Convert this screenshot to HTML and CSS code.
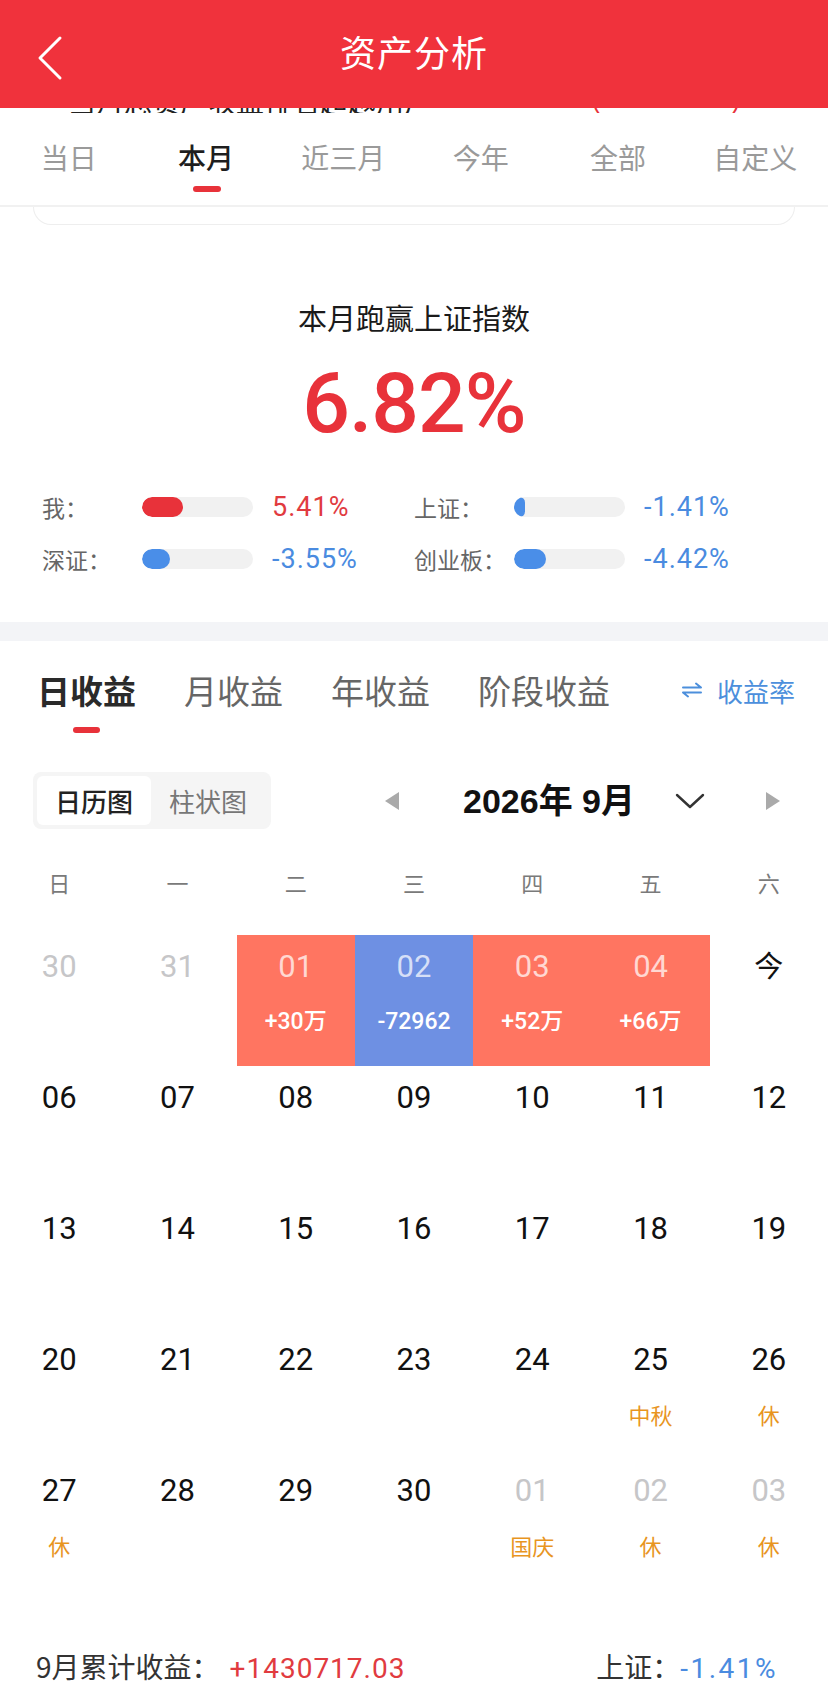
FILE: index.html
```html
<!DOCTYPE html>
<html lang="zh-CN">
<head>
<meta charset="utf-8">
<title>资产分析</title>
<link rel="stylesheet" href="styles.css">
</head>
<body>
<div class="page">
  <header class="nav">
    <svg class="back" width="30" height="46" viewBox="0 0 30 46"><polyline points="24,3 4,23 24,43" fill="none" stroke="#fff" stroke-width="3" stroke-linecap="round" stroke-linejoin="round"/></svg>
    <h1 class="nav-title">资产分析</h1>
  </header>

  <div class="period-bar">
    <div class="peek"><span class="peek-text">当月总资产收益排名超越用户</span><span class="peek-red a">（</span><span class="peek-red b">）</span></div>
    <div class="period-tabs">
      <div class="ptab">当日</div>
      <div class="ptab active">本月</div>
      <div class="ptab">近三月</div>
      <div class="ptab">今年</div>
      <div class="ptab">全部</div>
      <div class="ptab">自定义</div>
    </div>
  </div>
  <div class="card-edge"></div>

  <section class="beat">
    <div class="beat-title">本月跑赢上证指数</div>
    <div class="beat-value">6.82%</div>
    <div class="cmp-grid">
      <div class="cmp">
        <span class="cmp-label">我：</span>
        <span class="track"><span class="fill red" style="width:41px"></span></span>
        <span class="cmp-val red-t">5.41%</span>
      </div>
      <div class="cmp">
        <span class="cmp-label">上证：</span>
        <span class="track"><span class="fill blue" style="width:11px"></span></span>
        <span class="cmp-val blue-t">-1.41%</span>
      </div>
      <div class="cmp">
        <span class="cmp-label">深证：</span>
        <span class="track"><span class="fill blue" style="width:28px"></span></span>
        <span class="cmp-val blue-t">-3.55%</span>
      </div>
      <div class="cmp">
        <span class="cmp-label">创业板：</span>
        <span class="track"><span class="fill blue" style="width:32px"></span></span>
        <span class="cmp-val blue-t">-4.42%</span>
      </div>
    </div>
  </section>

  <div class="band"></div>

  <section class="income">
    <div class="itabs">
      <div class="itab active">日收益<span class="uline"></span></div>
      <div class="itab">月收益</div>
      <div class="itab">年收益</div>
      <div class="itab">阶段收益</div>
      <div class="rate">
        <svg class="swap" width="22" height="16" viewBox="0 0 22 16"><path d="M2 5.5H20L15 1.5M20 10.5H2L7 14.5" fill="none" stroke="#4c8fdc" stroke-width="2" stroke-linecap="round" stroke-linejoin="round"/></svg>
        <span>收益率</span>
      </div>
    </div>

    <div class="toolbar">
      <div class="seg">
        <div class="seg-item active">日历图</div>
        <div class="seg-item">柱状图</div>
      </div>
      <div class="month-nav">
        <svg class="tri" width="14" height="18" viewBox="0 0 14 18"><polygon points="14,0 14,18 0,9" fill="#aaaaaa"/></svg>
        <div class="month-title">2026年 9月</div>
        <svg class="chev" width="30" height="16" viewBox="0 0 30 16"><polyline points="2,2 15,14 28,2" fill="none" stroke="#333" stroke-width="2.4" stroke-linecap="round" stroke-linejoin="round"/></svg>
        <svg class="tri r" width="14" height="18" viewBox="0 0 14 18"><polygon points="0,0 14,9 0,18" fill="#aaaaaa"/></svg>
      </div>
    </div>

    <div class="weekdays">
      <div>日</div><div>一</div><div>二</div><div>三</div><div>四</div><div>五</div><div>六</div>
    </div>

    <div class="cal">
      <div class="cell"><span class="num dim">30</span></div>
      <div class="cell"><span class="num dim">31</span></div>
      <div class="cell up"><span class="num">01</span><span class="amt">+30万</span></div>
      <div class="cell down"><span class="num">02</span><span class="amt">-72962</span></div>
      <div class="cell up"><span class="num">03</span><span class="amt">+52万</span></div>
      <div class="cell up"><span class="num">04</span><span class="amt">+66万</span></div>
      <div class="cell"><span class="num today">今</span></div>

      <div class="cell"><span class="num">06</span></div>
      <div class="cell"><span class="num">07</span></div>
      <div class="cell"><span class="num">08</span></div>
      <div class="cell"><span class="num">09</span></div>
      <div class="cell"><span class="num">10</span></div>
      <div class="cell"><span class="num">11</span></div>
      <div class="cell"><span class="num">12</span></div>

      <div class="cell"><span class="num">13</span></div>
      <div class="cell"><span class="num">14</span></div>
      <div class="cell"><span class="num">15</span></div>
      <div class="cell"><span class="num">16</span></div>
      <div class="cell"><span class="num">17</span></div>
      <div class="cell"><span class="num">18</span></div>
      <div class="cell"><span class="num">19</span></div>

      <div class="cell"><span class="num">20</span></div>
      <div class="cell"><span class="num">21</span></div>
      <div class="cell"><span class="num">22</span></div>
      <div class="cell"><span class="num">23</span></div>
      <div class="cell"><span class="num">24</span></div>
      <div class="cell"><span class="num">25</span><span class="hol">中秋</span></div>
      <div class="cell"><span class="num">26</span><span class="hol">休</span></div>

      <div class="cell"><span class="num">27</span><span class="hol">休</span></div>
      <div class="cell"><span class="num">28</span></div>
      <div class="cell"><span class="num">29</span></div>
      <div class="cell"><span class="num">30</span></div>
      <div class="cell"><span class="num dim">01</span><span class="hol">国庆</span></div>
      <div class="cell"><span class="num dim">02</span><span class="hol">休</span></div>
      <div class="cell"><span class="num dim">03</span><span class="hol">休</span></div>
    </div>

    <div class="summary">
      <div class="sum-left">9月累计收益：<span class="red-t sum-num amount">+1430717.03</span></div>
      <div class="sum-right">上证：<span class="blue-t sum-num wide">-1.41%</span></div>
    </div>
  </section>
</div>
</body>
</html>
```

FILE: styles.css
```css
* { box-sizing: border-box; margin: 0; padding: 0; }
html, body { background: #fff; }
body {
  width: 828px;
  height: 1695px;
  overflow: hidden;
  font-family: "Noto Sans CJK SC", "Noto Sans", sans-serif;
  color: #222;
}
.page { width: 828px; }

/* header */
.nav {
  position: relative;
  height: 108px;
  background: #f0323c;
  display: flex;
  align-items: center;
  justify-content: center;
}
.back { position: absolute; left: 36px; top: 35px; }
.nav-title {
  font-size: 36px;
  font-weight: 400;
  color: #fff;
  line-height: 40px;
  margin-top: -6px;
  letter-spacing: 1px;
}

/* period tabs */
.period-bar {
  border-bottom: 2px solid #f1f1f1;
  height: 99px;
}
.peek {
  position: relative;
  height: 5px;
  overflow: hidden;
}
.peek-text {
  position: absolute;
  left: 68px;
  bottom: -2px;
  font-size: 28px;
  line-height: 28px;
  color: #222;
  white-space: nowrap;
}
.peek-red {
  position: absolute;
  bottom: -2px;
  font-size: 28px;
  line-height: 28px;
  color: #e8323a;
}
.peek-red.a { left: 574px; }
.peek-red.b { left: 730px; }
.period-tabs {
  display: flex;
  padding-top: 24px;
  padding-right: 4px;
}
.ptab {
  flex: 1;
  text-align: center;
  font-size: 28px;
  line-height: 40px;
  color: #9a9a9a;
  position: relative;
  height: 55px;
}
.ptab.active { color: #1e1e1e; font-weight: 500; }
.ptab.active::after {
  content: "";
  position: absolute;
  left: 50%;
  top: 49px;
  width: 28px;
  height: 6px;
  margin-left: -13px;
  border-radius: 3px;
  background: #e8323a;
}

.card-edge {
  margin: 0 33px;
  height: 18px;
  border: 1.5px solid #eeeeee;
  border-top: none;
  border-radius: 0 0 18px 18px;
}

/* beat section */
.beat { padding-top: 72px; padding-bottom: 37px; }
.beat-title {
  text-align: center;
  font-size: 29px;
  line-height: 40px;
  color: #1a1a1a;
}
.beat-value {
  margin-top: 17px;
  text-align: center;
  font-family: Roboto, "Noto Sans", sans-serif;
  font-size: 84px;
  line-height: 100px;
  font-weight: 500;
  letter-spacing: -1px;
  color: #e8323a;
}
.cmp-grid {
  margin-top: 27px;
  display: grid;
  grid-template-columns: 372px 372px;
  padding-left: 42px;
}
.cmp {
  display: flex;
  align-items: center;
  height: 52px;
}
.cmp-label {
  width: 100px;
  font-size: 23px;
  color: #666;
}
.track {
  width: 111px;
  height: 20px;
  border-radius: 10px;
  background: #f1f1f1;
  overflow: hidden;
  display: flex;
}
.fill { height: 20px; border-radius: 10px; }
.fill.red { background: #e8323a; }
.fill.blue { background: #4a8ee8; }
.cmp-val {
  margin-left: 19px;
  font-family: Roboto, "Noto Sans", sans-serif;
  font-size: 27px;
  letter-spacing: 1px;
}
.red-t { color: #e13b3f; }
.blue-t { color: #4a8be0; }

.band { height: 19px; background: #f3f4f7; }

/* income */
.income { padding-top: 27px; }
.itabs {
  display: flex;
  align-items: flex-start;
  padding-left: 37px;
  padding-right: 33px;
  gap: 48px;
  height: 65px;
}
.itab {
  position: relative;
  font-size: 33px;
  line-height: 44px;
  color: #666;
}
.itab.active { color: #2a2a2a; font-weight: 700; }
.uline {
  position: absolute;
  left: 50%;
  margin-left: -14px;
  top: 59px;
  width: 27px;
  height: 6px;
  border-radius: 3px;
  background: #e8323a;
}
.rate {
  margin-left: auto;
  display: flex;
  align-items: center;
  gap: 14px;
  height: 44px;
  font-size: 26px;
  color: #4c8fdc;
}

.toolbar {
  margin-top: 39px;
  display: flex;
  align-items: center;
  padding-left: 33px;
}
.seg {
  display: flex;
  width: 238px;
  height: 57px;
  padding: 4px;
  background: #f5f5f5;
  border-radius: 8px;
}
.seg-item {
  width: 114px;
  text-align: center;
  font-size: 26px;
  line-height: 49px;
  color: #777;
}
.seg-item.active {
  background: #fff;
  color: #222;
  border-radius: 6px;
  font-weight: 500;
}
.month-nav {
  display: flex;
  align-items: center;
  margin-left: 114px;
}
.month-title {
  margin-left: 64px;
  width: 170px;
  font-family: "Liberation Sans", "Noto Sans CJK SC", sans-serif;
  font-weight: 700;
  font-size: 34px;
  line-height: 40px;
  color: #111;
  white-space: nowrap;
}
.chev { margin-left: 42px; }
.tri.r { margin-left: 61px; }

.weekdays {
  margin-top: 33px;
  display: grid;
  grid-template-columns: repeat(7, 1fr);
  text-align: center;
  font-size: 22px;
  line-height: 40px;
  color: #7a7a7a;
}

.cal {
  margin-top: 33px;
  display: grid;
  grid-template-columns: repeat(7, 1fr);
  grid-auto-rows: 131px;
}
.cell {
  display: flex;
  flex-direction: column;
  align-items: center;
  padding-top: 12px;
}
.num {
  font-family: Roboto, "Noto Sans CJK SC", sans-serif;
  font-size: 31px;
  line-height: 40px;
  color: #111;
}
.num.today {
  font-family: "Noto Sans CJK SC", sans-serif;
  font-size: 29px;
  margin-top: -3px;
}
.num.dim { color: #c6c6c8; }
.cell.up { background: #ff7561; }
.cell.down { background: #6e90e3; }
.cell.up .num, .cell.down .num { color: rgba(255,255,255,0.72); }
.amt {
  margin-top: 20px;
  font-family: Roboto, "Noto Sans CJK SC", sans-serif;
  font-size: 23px;
  line-height: 30px;
  color: #fff;
  font-weight: 500;
}
.hol {
  margin-top: 19px;
  font-size: 22px;
  line-height: 30px;
  color: #e8951f;
}

.summary {
  margin-top: 56px;
  display: flex;
  justify-content: space-between;
  padding-left: 36px;
  padding-right: 50px;
  font-size: 28px;
  line-height: 40px;
  color: #333;
}
.sum-num {
  font-family: Roboto, "Noto Sans", sans-serif;
  letter-spacing: 1px;
}
.sum-num.amount { margin-left: 10px; }
.sum-num.wide { letter-spacing: 2.5px; }
```
